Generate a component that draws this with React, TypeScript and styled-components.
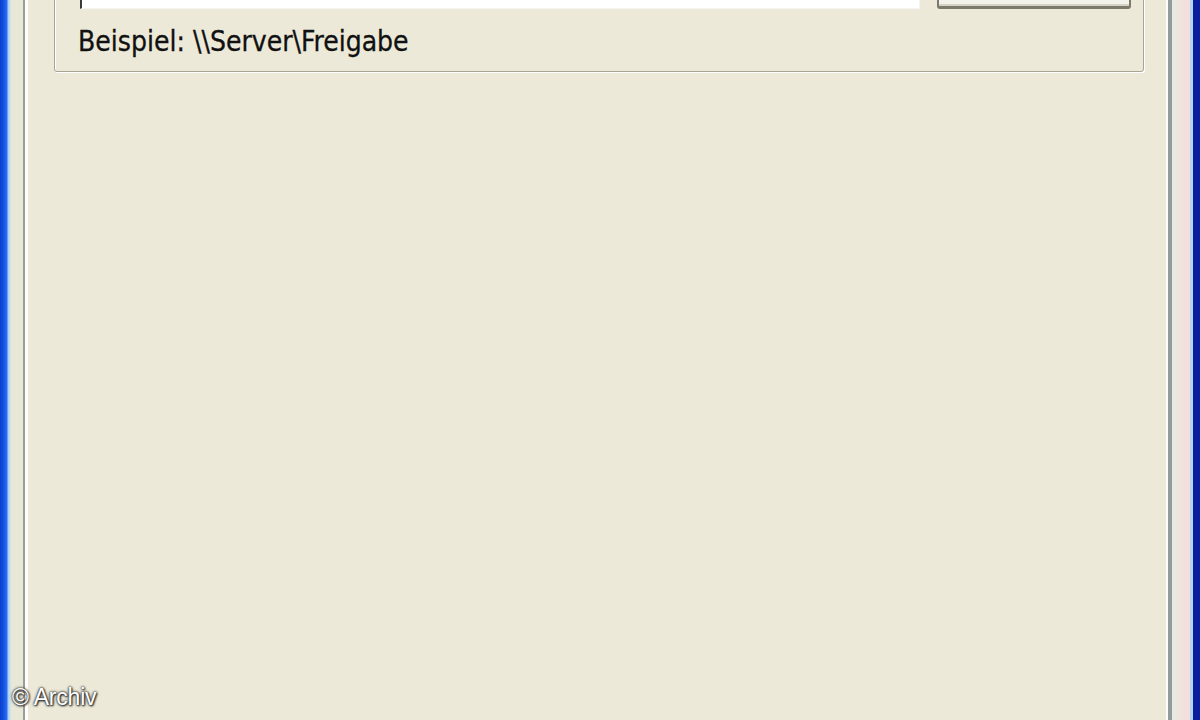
import React from 'react'
import styled, { createGlobalStyle } from 'styled-components'

const GlobalStyle = createGlobalStyle`
  html, body {
    margin: 0;
    padding: 0;
    width: 100%;
    height: 100%;
    overflow: hidden;
    background: #ece9d8;
  }
`

const Window = styled.div`
  position: relative;
  display: grid;
  grid-template-columns: 23px minmax(0, 1fr) 28px;
  width: 100vw;
  height: 100vh;
  overflow: hidden;
`

const LeftFrame = styled.div`
  background: linear-gradient(
    to right,
    #0a3cc8 0px,
    #1456e6 4px,
    #2f6ff2 7px,
    #a9cdf2 8px,
    #c4def2 10px,
    #e6e8d6 11px,
    #e9e8d8 22px,
    #e9e8d8 23px
  );
`

const RightFrame = styled.div`
  display: flex;
  justify-content: flex-end;
  background: linear-gradient(to right, #e4ebe4 0px, #ede6df 6px, #f2e0dc 12px, #f2e0dc 18px);
`

const FrameEdge = styled.div`
  width: 7px;
  background: #0a1f9e;
  border-left: 3px solid #b4d4f2;
`

const Sheet = styled.div`
  display: flex;
  flex-direction: column;
  background: #ece9d8;
  border-left: 2px solid #9c9c98;
  border-right: 4px solid #939c9a;
  box-shadow: inset 3px 0 0 #fdfdfb, inset -2px 0 0 #fcfcfa;
  padding: 0 24px 0 29px;
`

const GroupBox = styled.fieldset`
  margin: -40px 0 0 0;
  padding: 0 12px 14px 23px;
  border: 1px solid #a8a595;
  border-radius: 3px;
  box-shadow: inset 1px 1px 0 #ffffff, 1px 1px 0 #ffffff;
  display: flex;
  flex-direction: column;
  gap: 18px;
  min-width: 0;
`

const InputRow = styled.div`
  display: flex;
  align-items: stretch;
  gap: 17px;
  height: 48px;
  margin-left: 2px;
`

const TextBox = styled.div`
  flex: 1;
  background: #ffffff;
  border: 1px solid #f4f4f0;
  border-left: 2px solid #3a3a3a;
`

const BrowseButton = styled.div`
  flex: 0 0 194px;
  box-sizing: border-box;
  background: #f3f2ea;
  border: 2px solid #7c796c;
  border-bottom-width: 3px;
  border-radius: 3px;
  box-shadow: inset 0 -2px 0 #d6d2c2;
`

const Hint = styled.div`
  font-family: 'DejaVu Sans Condensed', 'DejaVu Sans', sans-serif;
  font-stretch: condensed;
  font-size: 28px;
  line-height: 30px;
  color: #111111;
  -webkit-text-stroke: 0.3px #111111;
`

const Watermark = styled.div`
  position: absolute;
  left: 12px;
  bottom: 9px;
  font-family: 'Liberation Sans', Arial, sans-serif;
  font-size: 23px;
  letter-spacing: -0.2px;
  color: #ffffff;
  text-shadow: 0 0 3px #2a2a2a, 0 0 2px #2a2a2a, 1px 1px 2px #222;
`

const App: React.FC = () => {
  return (
    <>
      <GlobalStyle />
      <Window>
        <LeftFrame />
        <Sheet>
          <GroupBox>
            <InputRow>
              <TextBox />
              <BrowseButton />
            </InputRow>
            <Hint>Beispiel: \\Server\Freigabe</Hint>
          </GroupBox>
        </Sheet>
        <RightFrame>
          <FrameEdge />
        </RightFrame>
        <Watermark>© Archiv</Watermark>
      </Window>
    </>
  )
}

export default App
